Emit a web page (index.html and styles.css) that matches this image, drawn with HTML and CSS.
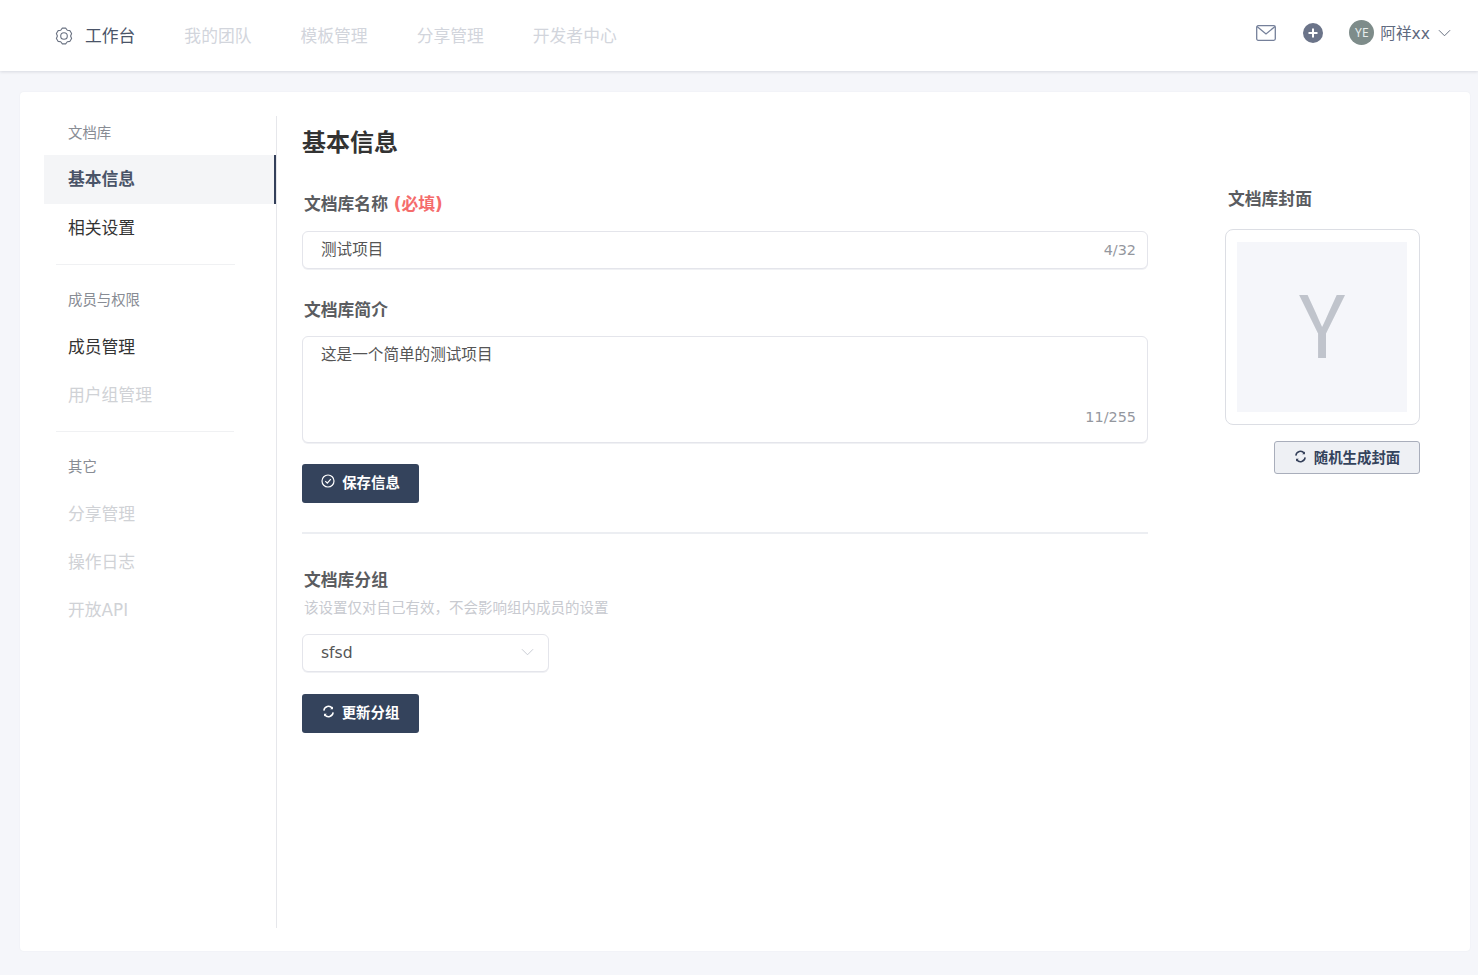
FILE: index.html
```html
<!DOCTYPE html>
<html lang="zh">
<head>
<meta charset="utf-8">
<title>基本信息</title>
<link rel="stylesheet" href="styles.css">
</head>
<body>
<header class="topbar">
  <nav class="topnav">
    <a class="topnav-item is-active">
      <svg class="gear" viewBox="0 0 18 18" width="18" height="18" fill="none" stroke="#6a7282" stroke-width="1.100" stroke-linejoin="round"><path d="M7.340 1.170L10.660 1.170L12.300 3.280L14.950 3.650L16.610 6.530L15.600 9L16.610 11.470L14.950 14.350L12.300 14.720L10.660 16.830L7.340 16.830L5.700 14.720L3.050 14.350L1.390 11.470L2.400 9L1.390 6.530L3.050 3.650L5.700 3.280Z"/><circle cx="9" cy="9" r="3.300"/></svg>
      工作台
    </a>
    <a class="topnav-item">我的团队</a>
    <a class="topnav-item">模板管理</a>
    <a class="topnav-item">分享管理</a>
    <a class="topnav-item">开发者中心</a>
  </nav>
  <div class="top-actions">
    <svg class="mail" viewBox="0 0 20 16" width="20" height="16" fill="none" stroke="#75809a" stroke-width="1.300"><rect x=".7" y=".7" width="18.600" height="14.600" rx="1.500"/><path d="M1 1.500l9 7.500 9-7.500"/></svg>
    <svg class="plus" viewBox="0 0 20 20" width="20" height="20"><circle cx="10" cy="10" r="10" fill="#6b7489"/><path d="M10 5.500v9M5.500 10h9" stroke="#fff" stroke-width="2"/></svg>
    <div class="user">
      <span class="avatar">YE</span>
      <span class="user-name">阿祥xx</span>
      <svg viewBox="0 0 14 8" width="13" height="8" fill="none" stroke="#5c6577" stroke-width="1"><path d="M1 1l6 6 6-6"/></svg>
    </div>
  </div>
</header>

<main class="page">
  <section class="card">
    <aside class="side">
      <div class="side-title side-title-first">文档库</div>
      <a class="side-item is-current">基本信息</a>
      <a class="side-item">相关设置</a>
      <hr class="side-rule">
      <div class="side-title">成员与权限</div>
      <a class="side-item">成员管理</a>
      <a class="side-item is-muted">用户组管理</a>
      <hr class="side-rule side-rule-second">
      <div class="side-title">其它</div>
      <a class="side-item is-muted">分享管理</a>
      <a class="side-item is-muted">操作日志</a>
      <a class="side-item is-muted">开放API</a>
    </aside>

    <div class="content">
      <h1 class="heading">基本信息</h1>
      <div class="columns">
        <form class="form">
          <div class="label">文档库名称 <span class="required">(必填)</span></div>
          <div class="field field-input"><span class="field-text">测试项目</span><span class="count">4/32</span></div>
          <div class="label label-intro">文档库简介</div>
          <div class="field field-area"><span>这是一个简单的测试项目</span><span class="count count-area">11/255</span></div>
          <button type="button" class="btn btn-primary">
            <svg viewBox="0 0 14 14" width="14" height="14" fill="none" stroke="#fff" stroke-width="1.200"><circle cx="7" cy="7" r="6"/><path d="M4.300 7.200l2 2 3.500-4"/></svg>
            保存信息
          </button>
          <hr class="form-rule">
          <div class="label label-group">文档库分组</div>
          <div class="hint">该设置仅对自己有效，不会影响组内成员的设置</div>
          <div class="field field-select"><span class="select-text">sfsd</span>
            <svg viewBox="0 0 14 8" width="13" height="8" fill="none" stroke="#c5c8d0" stroke-width="1"><path d="M1 1l6 6 6-6"/></svg>
          </div>
          <button type="button" class="btn btn-primary btn-update">
            <svg viewBox="0 0 14 14" width="13" height="13" fill="none" stroke="#fff" stroke-width="1.600"><path d="M2 6a5 5 0 0 1 9-2.500M12 8a5 5 0 0 1-9 2.500"/><path d="M11.800 1.500v3h-3zM2.200 12.500v-3h3z" fill="#fff" stroke="none"/></svg>
            更新分组
          </button>
        </form>

        <div class="cover">
          <div class="label cover-label">文档库封面</div>
          <div class="cover-box"><div class="cover-img">Y</div></div>
          <button type="button" class="btn btn-light">
            <svg viewBox="0 0 14 14" width="13" height="13" fill="none" stroke="#34405a" stroke-width="1.600"><path d="M2 6a5 5 0 0 1 9-2.500M12 8a5 5 0 0 1-9 2.500"/><path d="M11.800 1.500v3h-3zM2.200 12.500v-3h3z" fill="#34405a" stroke="none"/></svg>
            随机生成封面
          </button>
        </div>
      </div>
    </div>
  </section>
</main>
</body>
</html>
```

FILE: styles.css
```css
* { box-sizing: border-box; }
html, body { margin: 0; height: 100%; }
body {
  background: #f5f6fa;
  font-family: "DejaVu Sans", "Noto Sans CJK SC", sans-serif;
  color: #333;
  font-size: 14.4px;
}
.topbar {
  height: 71px;
  background: #fff;
  box-shadow: 0 1px 3px rgba(40, 50, 70, .14);
  display: flex;
  align-items: center;
  justify-content: space-between;
  padding: 0 27px 0 55px;
}
.topnav { display: flex; gap: 49px; }
.topnav-item {
  display: flex;
  align-items: center;
  gap: 12px;
  font-size: 16.8px;
  line-height: 24px;
  color: #d2d5dc;
}
.topnav-item.is-active { color: #4a5468; }
.top-actions { display: flex; align-items: center; margin-top: -6px; }
.mail { margin-right: 27px; }
.plus { margin-right: 26px; }
.user { display: flex; align-items: center; color: #5f6a80; font-size: 15.6px; }
.avatar {
  width: 25px;
  height: 25px;
  border-radius: 50%;
  background: #7e8c8a;
  color: #e8ecec;
  font-size: 12px;
  font-family: "Noto Sans", sans-serif;
  display: flex;
  align-items: center;
  justify-content: center;
  margin-right: 6px;
}
.user-name { margin-right: 8px; margin-top: -2px; }

.page { padding: 21px 8px 24px 20px; }
.card {
  height: 859px;
  background: #fff;
  border-radius: 4px;
  box-shadow: 0 0 2px rgba(40, 50, 70, .06);
  padding: 24px;
  display: flex;
}
.side {
  width: 233px;
  height: 812px;
  border-right: 1px solid #e6e7eb;
}
.side-title {
  height: 40px;
  padding: 8px 0 0 24px;
  line-height: 18px;
  font-size: 14.4px;
  color: #888c94;
}
.side-title-first { height: 39px; }
.side-item {
  display: block;
  height: 48px;
  line-height: 48px;
  padding-left: 24px;
  font-size: 16.8px;
  color: #333;
}
.side-item.is-muted { color: #d0d2d6; }
.side-item.is-current {
  width: 232px;
  height: 49px;
  background: #f4f5f7;
  border-right: 2px solid #34405a;
  color: #4a5468;
  font-weight: 700;
}
.side-rule {
  margin: 12px 41px 0 12px;
  border: 0;
  border-top: 1px solid #f0f1f3;
  height: 19px;
}
.side-rule-second { margin-right: 42px; }
.content { flex: 1; padding-left: 25px; }
.heading {
  margin: 0;
  font-size: 24px;
  line-height: 36px;
  padding-top: 9px;
  height: 62px;
  font-weight: 700;
  color: #333;
}
.columns { display: flex; }
.form { width: 846px; }
.label {
  font-size: 16.8px;
  font-weight: 700;
  line-height: 24px;
  color: #5a5c60;
  padding-left: 2px;
}
.form > .label:first-child { margin-top: 14px; }
.required { color: #f56c6c; }
.field {
  border: 1px solid #e4e5eb;
  box-shadow: 0 1px 0 #f0f1f4;
  border-radius: 6px;
  background: #fff;
  font-size: 15.6px;
  color: #555;
  padding: 0 11px 0 18px;
  display: flex;
  align-items: center;
  justify-content: space-between;
}
.field-text { margin-top: -5px; }
.select-text { margin-top: -1px; }
.field-input { height: 38px; margin-top: 15px; }
.label-intro { margin-top: 29px; }
.field-area {
  height: 107px;
  margin-top: 14px;
  position: relative;
  align-items: flex-start;
  padding-top: 8px;
  line-height: 20px;
}
.count { font-size: 14.4px; color: #94979e; }
.count-area { position: absolute; right: 11px; bottom: 15px; }
.btn {
  display: flex;
  align-items: center;
  justify-content: center;
  gap: 7px;
  font-family: inherit;
  font-size: 14.4px;
  font-weight: 700;
  border-radius: 3px;
  cursor: pointer;
  padding: 0 0 5px;
}
.btn-primary {
  width: 117px;
  height: 39px;
  margin-top: 21px;
  background: #34435c;
  border: 0;
  color: #fff;
}
.form-rule { border: 0; border-top: 2px solid #eceef2; margin: 29px 0 0; }
.label-group { margin-top: 34px; }
.hint { font-size: 14.5px; line-height: 20px; color: #c8cad0; padding-left: 2px; margin-top: 6px; }
.field-select { width: 247px; height: 38px; margin-top: 16px; padding-right: 14px; }
.field-select svg { margin-top: -2px; }
.btn-update { margin-top: 22px; }
.cover { margin-left: 77px; width: 195px; display: flex; flex-direction: column; }
.cover-label { margin-top: 9px; padding-left: 3px; }
.cover-box {
  width: 195px;
  height: 196px;
  margin-top: 18px;
  border: 1px solid #dcdee4;
  border-radius: 8px;
  padding: 12px 12px 12px 11px;
}
.cover-img {
  width: 170px;
  height: 170px;
  background: #f5f6fa;
  color: #c0c4cc;
  font-family: "Noto Sans CJK SC", sans-serif;
  font-size: 86px;
  line-height: 158px;
  text-align: center;
}
.btn-light {
  align-self: flex-end;
  width: 146px;
  height: 33px;
  margin-top: 16px;
  background: #eef0f4;
  border: 1px solid #a9aebb;
  color: #34435c;
  padding-bottom: 2px;
}
```
